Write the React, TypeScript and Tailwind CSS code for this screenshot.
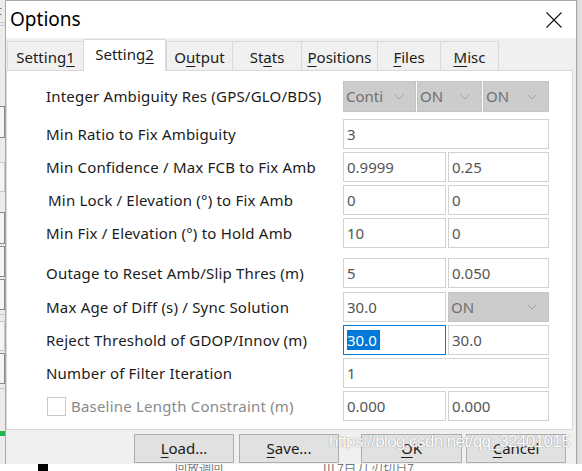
import React from "react";

const FONT = { fontFamily: '"Noto Sans", "Open Sans", sans-serif' };

function U({ children }: { children: React.ReactNode }) {
  return <span className="underline underline-offset-[3px] decoration-1">{children}</span>;
}

function Chevron() {
  return (
    <svg width="10" height="6" viewBox="0 0 10 6" className="shrink-0">
      <path d="M0.5 0.5 L5 5 L9.5 0.5" fill="none" stroke="#a3a3a3" strokeWidth="1" />
    </svg>
  );
}

function Combo({ value, w, h = 30 }: { value: string; w: string; h?: number }) {
  return (
    <div
      className={`${w} ${h === 31 ? "h-[31px]" : "h-[30px]"} border border-[#c4c4c4] bg-[#cccccc] flex items-center justify-between pl-[2px] pr-[11px] text-[15px] text-[#707070]`}
    >
      <span>{value}</span>
      <Chevron />
    </div>
  );
}

function Field({ value, w, focused }: { value: string; w: string; focused?: boolean }) {
  return (
    <div
      className={`${w} h-[30px] border ${focused ? "border-[#0078d7]" : "border-[#d2d2d2]"} bg-white flex items-center pl-[3px] text-[15px] text-[#555555]`}
    >
      {focused ? (
        <span className="bg-[#0078d7] text-white leading-[20px] pr-[3px]">{value}</span>
      ) : (
        <span>{value}</span>
      )}
    </div>
  );
}

function Label({ children, className = "" }: { children: React.ReactNode; className?: string }) {
  return (
    <div className={`w-[297px] shrink-0 text-[15px] tracking-[0.2px] text-[#1b1b1b] ${className}`}>{children}</div>
  );
}

function Tab({ label, w, selected }: { label: React.ReactNode; w: string; selected?: boolean }) {
  if (selected) {
    return (
      <div
        className={`${w} h-[32px] -mb-px relative z-10 bg-white border-t border-l border-r border-[#d9d9d9] flex justify-center pt-[3px] text-[15px] text-[#1b1b1b]`}
      >
        {label}
      </div>
    );
  }
  return (
    <div
      className={`${w} h-[29px] bg-[#f0f0f0] border-t border-l border-[#d9d9d9] flex items-center justify-center pt-[2px] text-[15px] text-[#1b1b1b]`}
    >
      {label}
    </div>
  );
}

function Button({ children, w = "w-[100px]" }: { children: React.ReactNode; w?: string }) {
  return (
    <div className={`${w} h-[29px] border border-[#adadad] bg-[#e1e1e1] flex items-center justify-center text-[15px] text-[#1b1b1b]`}>
      {children}
    </div>
  );
}

export default function App() {
  return (
    <div className="w-[582px] h-[471px] overflow-hidden bg-white relative" style={FONT}>
      <div className="flex h-[464px]">
        {/* background app at left */}
        <div className="w-[5px] shrink-0 bg-[#ececec] flex flex-col overflow-hidden">
          <div className="h-[22px] text-[13px] leading-[20px] text-[#777] -ml-[3px]">t</div>
          <div className="h-px bg-[#c8c8c8]" />
          <div className="h-px bg-[#c8c8c8] mt-[2px]" />
          <div className="h-[32px] mt-[80px] border border-[#8a8a8a] bg-[#f4f4f4] -ml-[3px]" />
          <div className="h-[30px] mt-[24px] border border-[#c8c8c8] bg-[#f4f4f4] -ml-[3px]" />
          <div className="h-[32px] mt-[20px] border border-[#8a8a8a] bg-[#f4f4f4] -ml-[3px]" />
          <div className="h-[31px] mt-[2px] border border-[#8a8a8a] bg-[#f4f4f4] -ml-[3px]" />
          <div className="h-[31px] mt-[2px] border border-[#8a8a8a] bg-[#f4f4f4] -ml-[3px]" />
          <div className="h-px bg-[#c8c8c8] mt-[4px]" />
          <div className="h-[30px] mt-[6px] border border-[#c8c8c8] bg-[#f4f4f4] -ml-[3px]" />
          <div className="h-[31px] mt-[2px] border border-[#8a8a8a] bg-[#f4f4f4] -ml-[3px]" />
          <div className="h-px bg-[#c8c8c8] mt-[4px]" />
          <div className="h-[5px] mt-[42px] bg-[#22b14c]" />
        </div>

        {/* dialog */}
        <div className="w-[572px] shrink-0 border-l border-r border-t border-[#a9a9a9] bg-[#f0f0f0] flex flex-col">
          {/* title bar */}
          <div className="h-[37px] bg-white flex items-center justify-between pl-[4px] pr-[14px]">
            <span className="text-[19px] text-black leading-none">Options</span>
            <svg width="16" height="16" viewBox="0 0 16 16">
              <path d="M0.5 0.5 L15.5 15.5 M15.5 0.5 L0.5 15.5" stroke="#111" strokeWidth="1.1" />
            </svg>
          </div>

          {/* tabs */}
          <div className="h-[32px] flex items-end pl-[1px]">
            <Tab w="w-[76px]" label={<span>Setting<U>1</U></span>} />
            <Tab w="w-[83px]" selected label={<span>Setting<U>2</U></span>} />
            <Tab w="w-[66px]" label={<span>O<U>u</U>tput</span>} />
            <Tab w="w-[69px]" label={<span>St<U>a</U>ts</span>} />
            <Tab w="w-[76px]" label={<span><U>P</U>ositions</span>} />
            <Tab w="w-[63px]" label={<span><U>F</U>iles</span>} />
            <div className="border-r border-[#d9d9d9] flex">
              <Tab w="w-[58px]" label={<span><U>M</U>isc</span>} />
            </div>
          </div>

          {/* panel */}
          <div className="w-[567px] h-[360px] bg-white border border-[#d9d9d9] pl-[39px] pt-[10px] flex flex-col">
            <div className="flex items-center h-[31px]">
              <Label>Integer Ambiguity Res (GPS/GLO/BDS)</Label>
              <div className="flex gap-[1px]">
                <Combo value="Conti" w="w-[73px]" h={31} />
                <Combo value="ON" w="w-[65px]" h={31} />
                <Combo value="ON" w="w-[66px]" h={31} />
              </div>
            </div>

            <div className="flex items-center h-[30px] mt-[7px]">
              <Label>Min Ratio to Fix Ambiguity</Label>
              <Field value="3" w="w-[206px]" />
            </div>

            <div className="flex items-center h-[30px] mt-[3px]">
              <Label>Min Confidence / Max FCB to Fix Amb</Label>
              <div className="flex gap-[2px]">
                <Field value="0.9999" w="w-[103px]" />
                <Field value="0.25" w="w-[101px]" />
              </div>
            </div>

            <div className="flex items-center h-[30px] mt-[3px]">
              <Label className="pl-[2px]">Min Lock / Elevation (°) to Fix Amb</Label>
              <div className="flex gap-[2px]">
                <Field value="0" w="w-[103px]" />
                <Field value="0" w="w-[101px]" />
              </div>
            </div>

            <div className="flex items-center h-[30px] mt-[3px]">
              <Label>Min Fix / Elevation (°) to Hold Amb</Label>
              <div className="flex gap-[2px]">
                <Field value="10" w="w-[103px]" />
                <Field value="0" w="w-[101px]" />
              </div>
            </div>

            <div className="flex items-center h-[30px] mt-[10px]">
              <Label>Outage to Reset Amb/Slip Thres (m)</Label>
              <div className="flex gap-[2px]">
                <Field value="5" w="w-[103px]" />
                <Field value="0.050" w="w-[101px]" />
              </div>
            </div>

            <div className="flex items-center h-[30px] mt-[4px]">
              <Label>Max Age of Diff (s) / Sync Solution</Label>
              <div className="flex gap-[2px]">
                <Field value="30.0" w="w-[103px]" />
                <Combo value="ON" w="w-[101px]" />
              </div>
            </div>

            <div className="flex items-center h-[30px] mt-[3px]">
              <Label>Reject Threshold of GDOP/Innov (m)</Label>
              <div className="flex gap-[2px]">
                <Field value="30.0" w="w-[103px]" focused />
                <Field value="30.0" w="w-[101px]" />
              </div>
            </div>

            <div className="flex items-center h-[30px] mt-[3px]">
              <Label>Number of Filter Iteration</Label>
              <Field value="1" w="w-[206px]" />
            </div>

            <div className="flex items-center h-[30px] mt-[3px]">
              <Label>
                <div className="flex items-center">
                  <div className="w-[19px] h-[19px] border border-[#c8c8c8] bg-white ml-[1px] mr-[5px]" />
                  <span className="text-[#8a8a8a]">Baseline Length Constraint (m)</span>
                </div>
              </Label>
              <div className="flex gap-[2px]">
                <Field value="0.000" w="w-[103px]" />
                <Field value="0.000" w="w-[101px]" />
              </div>
            </div>
          </div>

          {/* buttons */}
          <div className="h-[34px] flex items-start pt-[4px] pl-[128px]">
            <Button><span><U>L</U>oad...</span></Button>
            <div className="ml-[5px]"><Button><span><U>S</U>ave...</span></Button></div>
            <div className="ml-[22px]"><Button w="w-[101px]"><span><U>O</U>K</span></Button></div>
            <div className="ml-[4px]"><Button><span><U>C</U>ancel</span></Button></div>
          </div>
        </div>

        {/* shadow at right */}
        <div className="w-[5px] shrink-0 bg-[#e2e2e2] border-l border-[#d0d0d0]" />
      </div>

      {/* background app at bottom */}
      <div className="h-[7px] flex items-start overflow-hidden">
        <div className="w-[38px]" />
        <div className="w-[10px] h-[7px] bg-black" />
        <div className="w-[127px]" />
        <div className="text-[12px] leading-[12px] text-[#777] -mt-[2px]" style={{ fontFamily: '"Noto Sans CJK SC", sans-serif' }}>回放调回</div>
        <div className="w-[100px]" />
        <div className="text-[12px] leading-[12px] text-[#777] -mt-[2px]" style={{ fontFamily: '"Noto Sans CJK SC", sans-serif' }}>Ш 7白刀.刃切日7</div>
      </div>

      {/* watermark */}
      <div
        className="absolute left-[329px] top-[431px] text-[17px] leading-[22px] text-white tracking-[-0.6px] pointer-events-none whitespace-nowrap"
        style={{ fontFamily: '"Liberation Sans", Arial, sans-serif', textShadow: "0 0 1px #9a9a9a, 0 0 1px #9a9a9a" }}
      >
        https://blog.csdn.net/qq_32401015
      </div>
    </div>
  );
}
